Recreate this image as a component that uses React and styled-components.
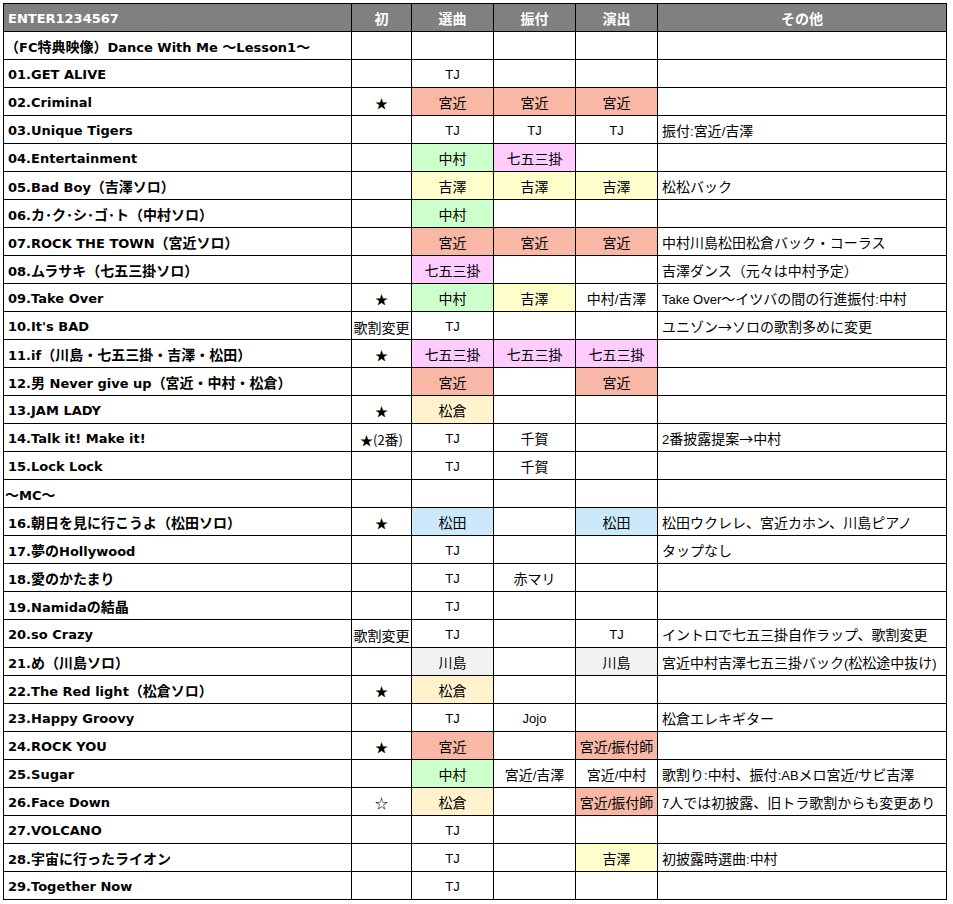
import React from "react";
import styled, { createGlobalStyle } from "styled-components";

const Global = createGlobalStyle`
  html, body { margin: 0; padding: 0; background: #fff; }
  body { font-family: "Liberation Sans", "Noto Sans CJK JP", sans-serif; color: #000; }
`;

const Page = styled.div`
  padding: 3px 0 0 3px;
`;

const Sheet = styled.table`
  border-collapse: collapse;
  table-layout: fixed;
  width: 944px;
  font-size: 13px;
`;

const Col = styled.col`
  width: ${(p) => p.$w}px;
`;

const Row = styled.tr`
  height: 28px;
`;

const baseCell = `
  border: 1px solid #000;
  padding: 3px 4px 0;
  white-space: nowrap;
  overflow: hidden;
  vertical-align: middle;
  line-height: 16px;
`;

const HeadCell = styled.th`
  ${baseCell}
  background: #808080;
  color: #fff;
  font-family: "DejaVu Sans", "Noto Sans CJK JP", sans-serif;
  font-weight: bold;
  font-size: 13px;
  text-align: ${(p) => (p.$left ? "left" : "center")};
`;

const NameCell = styled.td`
  ${baseCell}
  font-family: "DejaVu Sans", "Noto Sans CJK JP", sans-serif;
  font-weight: bold;
  text-align: left;
  padding-left: ${(p) => (p.$flush ? "1px" : "4px")};
`;

const Jp = styled.span`
  font-family: "Noto Sans CJK JP", sans-serif;
  font-size: 14px;
`;

const MarkCell = styled.td`
  ${baseCell}
  padding-left: 0;
  padding-right: 0;
  text-align: center;
  font-family: "Noto Sans CJK JP", sans-serif;
`;

const tones = {
  s: "#f9b8a6",
  g: "#ccffcc",
  p: "#ffccff",
  y: "#ffffcc",
  c: "#fff2cc",
  b: "#cce9fb",
  k: "#f2f2f2",
};

const StaffCell = styled.td`
  ${baseCell}
  padding-left: 0;
  padding-right: 0;
  text-align: center;
  background: ${(p) => (p.$tone ? tones[p.$tone] : "#fff")};
`;

const NoteCell = styled.td`
  ${baseCell}
  text-align: left;
`;

const CJK = /([\u2190-\u21ff\u3000-\u30ff\u3400-\u9fff\uff00-\uffef]+)/;

const Mixed = ({ text }) =>
  text
    .split(CJK)
    .filter(Boolean)
    .map((part, i) => (CJK.test(part) ? <Jp key={i}>{part}</Jp> : <React.Fragment key={i}>{part}</React.Fragment>));

const rows = [
  ["（FC特典映像）Dance With Me ～Lesson1～", "", null, null, null, ""],
  ["01.GET ALIVE", "", ["TJ"], null, null, ""],
  ["02.Criminal", "★", ["宮近", "s"], ["宮近", "s"], ["宮近", "s"], ""],
  ["03.Unique Tigers", "", ["TJ"], ["TJ"], ["TJ"], "振付:宮近/吉澤"],
  ["04.Entertainment", "", ["中村", "g"], ["七五三掛", "p"], null, ""],
  ["05.Bad Boy（吉澤ソロ）", "", ["吉澤", "y"], ["吉澤", "y"], ["吉澤", "y"], "松松バック"],
  ["06.カ･ク･シ･ゴ･ト（中村ソロ）", "", ["中村", "g"], null, null, ""],
  ["07.ROCK THE TOWN（宮近ソロ）", "", ["宮近", "s"], ["宮近", "s"], ["宮近", "s"], "中村川島松田松倉バック・コーラス"],
  ["08.ムラサキ（七五三掛ソロ）", "", ["七五三掛", "p"], null, null, "吉澤ダンス（元々は中村予定）"],
  ["09.Take Over", "★", ["中村", "g"], ["吉澤", "y"], ["中村/吉澤"], "Take Over～イツバの間の行進振付:中村"],
  ["10.It's BAD", "歌割変更", ["TJ"], null, null, "ユニゾン→ソロの歌割多めに変更"],
  ["11.if（川島・七五三掛・吉澤・松田）", "★", ["七五三掛", "p"], ["七五三掛", "p"], ["七五三掛", "p"], ""],
  ["12.男 Never give up（宮近・中村・松倉）", "", ["宮近", "s"], null, ["宮近", "s"], ""],
  ["13.JAM LADY", "★", ["松倉", "c"], null, null, ""],
  ["14.Talk it! Make it!", "★(2番)", ["TJ"], ["千賀"], null, "2番披露提案→中村"],
  ["15.Lock Lock", "", ["TJ"], ["千賀"], null, ""],
  ["～MC～", "", null, null, null, "", true],
  ["16.朝日を見に行こうよ（松田ソロ）", "★", ["松田", "b"], null, ["松田", "b"], "松田ウクレレ、宮近カホン、川島ピアノ"],
  ["17.夢のHollywood", "", ["TJ"], null, null, "タップなし"],
  ["18.愛のかたまり", "", ["TJ"], ["赤マリ"], null, ""],
  ["19.Namidaの結晶", "", ["TJ"], null, null, ""],
  ["20.so Crazy", "歌割変更", ["TJ"], null, ["TJ"], "イントロで七五三掛自作ラップ、歌割変更"],
  ["21.め（川島ソロ）", "", ["川島", "k"], null, ["川島", "k"], "宮近中村吉澤七五三掛バック(松松途中抜け)"],
  ["22.The Red light（松倉ソロ）", "★", ["松倉", "c"], null, null, ""],
  ["23.Happy Groovy", "", ["TJ"], ["Jojo"], null, "松倉エレキギター"],
  ["24.ROCK YOU", "★", ["宮近", "s"], null, ["宮近/振付師", "s"], ""],
  ["25.Sugar", "", ["中村", "g"], ["宮近/吉澤"], ["宮近/中村"], "歌割り:中村、振付:ABメロ宮近/サビ吉澤"],
  ["26.Face Down", "☆", ["松倉", "c"], null, ["宮近/振付師", "s"], "7人では初披露、旧トラ歌割からも変更あり"],
  ["27.VOLCANO", "", ["TJ"], null, null, ""],
  ["28.宇宙に行ったライオン", "", ["TJ"], null, ["吉澤", "y"], "初披露時選曲:中村"],
  ["29.Together Now", "", ["TJ"], null, null, ""],
];

const Staff = ({ v }) => (
  <StaffCell $tone={v && v[1]}>{v ? <Mixed text={v[0]} /> : ""}</StaffCell>
);

export default function App() {
  return (
    <Page>
      <Global />
      <Sheet>
        <colgroup>
          <Col $w={348} />
          <Col $w={60} />
          <Col $w={82} />
          <Col $w={82} />
          <Col $w={82} />
          <Col $w={289} />
        </colgroup>
        <thead>
          <Row>
            <HeadCell $left>ENTER1234567</HeadCell>
            <HeadCell><Jp>初</Jp></HeadCell>
            <HeadCell><Jp>選曲</Jp></HeadCell>
            <HeadCell><Jp>振付</Jp></HeadCell>
            <HeadCell><Jp>演出</Jp></HeadCell>
            <HeadCell><Jp>その他</Jp></HeadCell>
          </Row>
        </thead>
        <tbody>
          {rows.map((r, i) => (
            <Row key={i}>
              <NameCell $flush={i === 0 || r[6]}><Mixed text={r[0]} /></NameCell>
              <MarkCell><Mixed text={r[1]} /></MarkCell>
              <Staff v={r[2]} />
              <Staff v={r[3]} />
              <Staff v={r[4]} />
              <NoteCell><Mixed text={r[5]} /></NoteCell>
            </Row>
          ))}
        </tbody>
      </Sheet>
    </Page>
  );
}
